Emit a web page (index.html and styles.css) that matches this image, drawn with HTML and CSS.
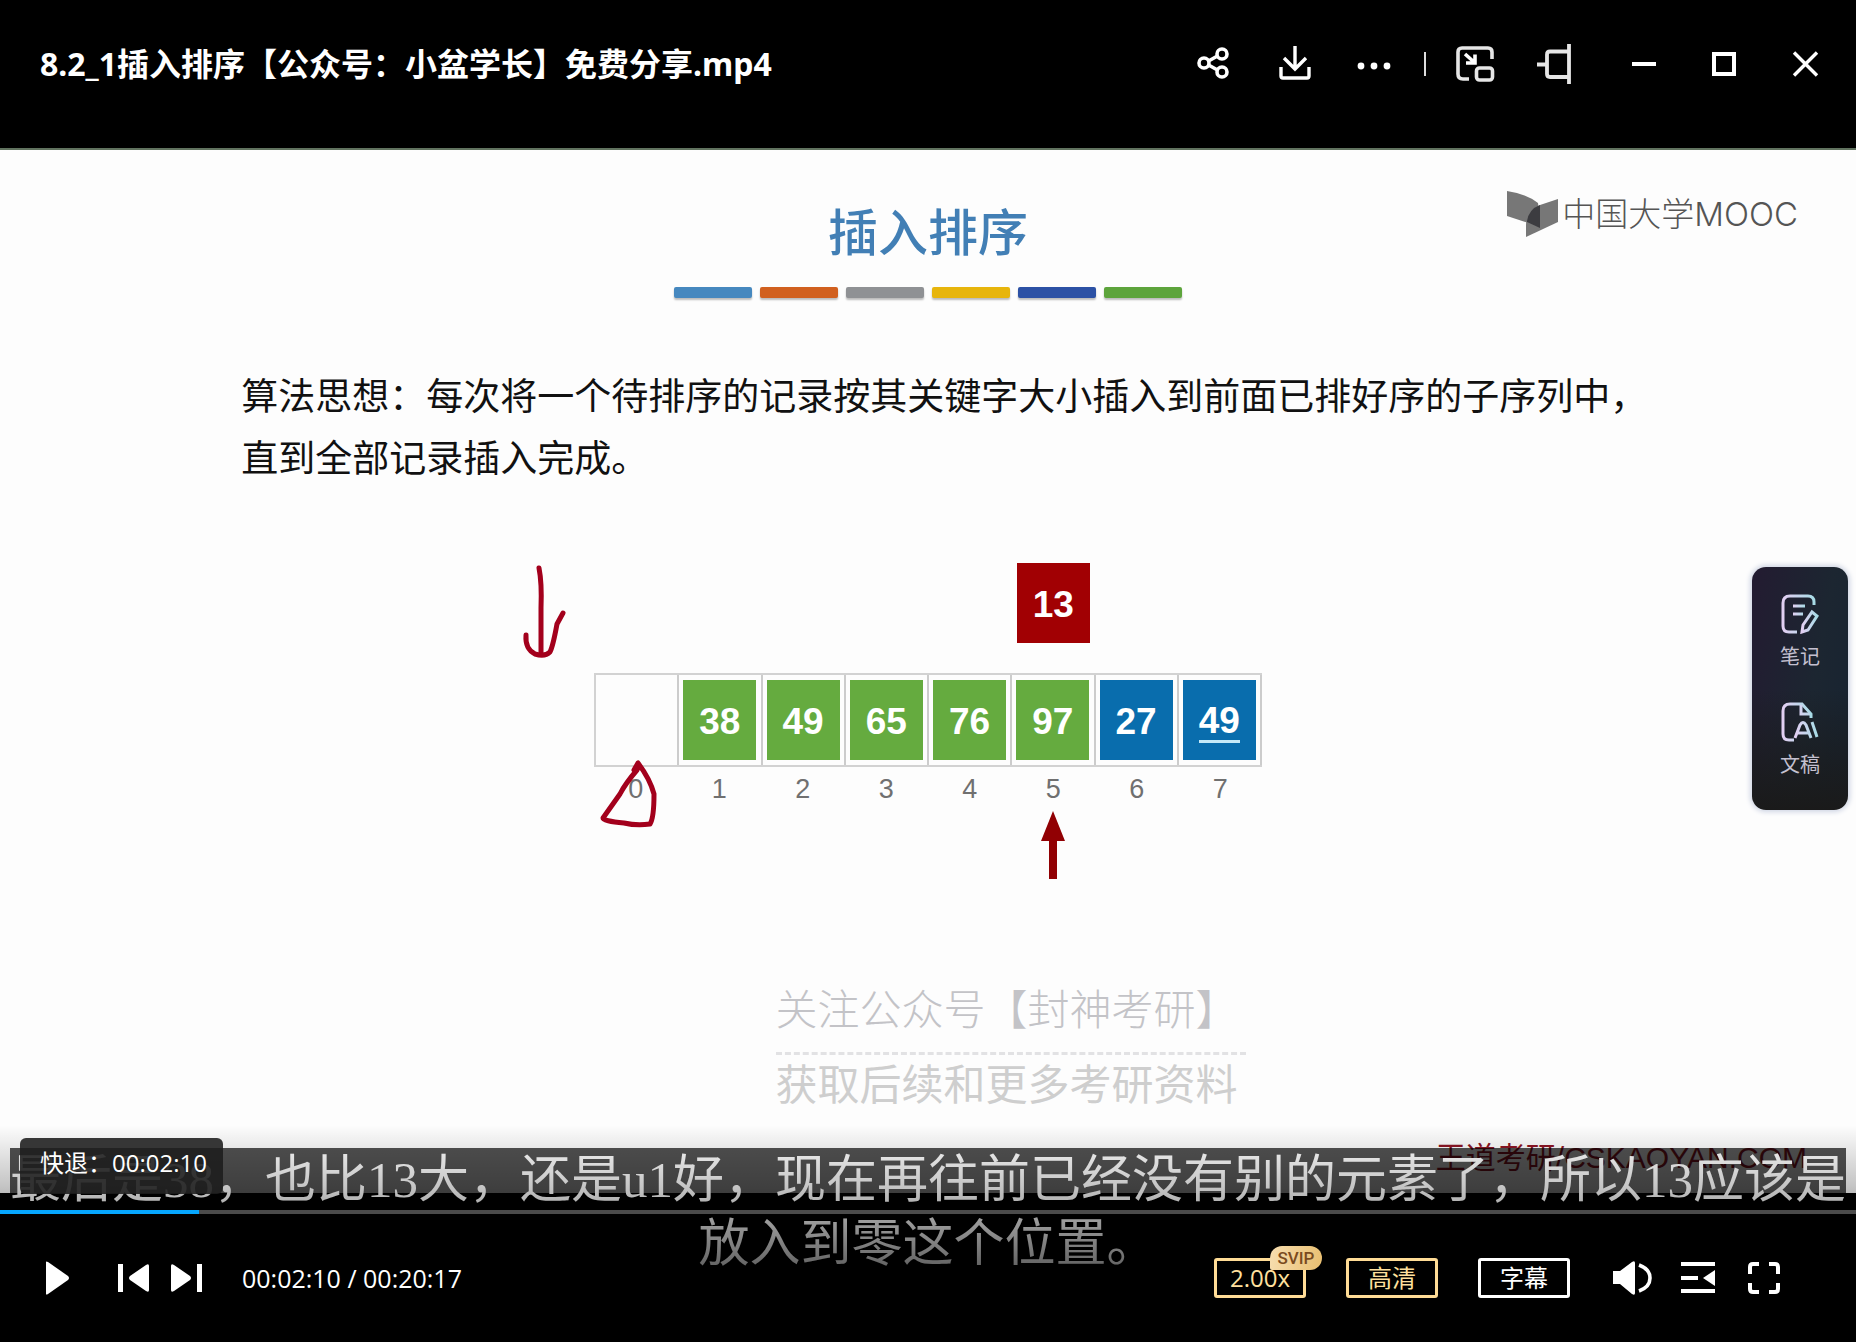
FILE: index.html
```html
<!DOCTYPE html>
<html lang="zh-CN">
<head>
<meta charset="utf-8">
<meta name="viewport" content="width=device-width, initial-scale=1">
<title>8.2_1插入排序【公众号：小盆学长】免费分享.mp4</title>
<link rel="stylesheet" href="styles.css">
</head>
<body>
<div class="player">
  <header class="titlebar">
    <h1 class="file-name">8.2_1插入排序【公众号：小盆学长】免费分享.mp4</h1>
    <div class="actions">
      <button class="icon-btn" aria-label="分享"><svg viewBox="0 0 40 40"><g fill="none" stroke="#fff" stroke-width="3.600"><circle cx="9" cy="19" r="5"/><circle cx="27" cy="10" r="5"/><circle cx="27" cy="28" r="5"/><path d="M13.500 17l9-5M13.500 21l9 5"/></g></svg></button>
      <button class="icon-btn" aria-label="下载"><svg viewBox="0 0 40 40"><path d="M20 2v22M9 14l11 11 11-11M6 23v9q0 2 2 2h24q2 0 2-2v-9" fill="none" stroke="#fff" stroke-width="3.400"/></svg></button>
      <button class="icon-btn" aria-label="更多"><svg viewBox="0 0 40 40"><g fill="#fff"><circle cx="6" cy="22" r="3.400"/><circle cx="19" cy="22" r="3.400"/><circle cx="32" cy="22" r="3.400"/></g></svg></button>
    </div>
    <span class="separator"></span>
    <div class="actions">
      <button class="icon-btn" aria-label="画中画"><svg viewBox="0 0 40 40"><g fill="none" stroke="#e6e6e6" stroke-width="3.600"><path d="M37 15V8q0-4-4-4H7Q3 4 3 8v22q0 5 5 5h6"/><rect x="21.500" y="24" width="16" height="12" rx="3"/></g><path d="M10 10l9 8M20 10.500V19h-9" fill="none" stroke="#fff" stroke-width="3.600"/></svg></button>
      <button class="icon-btn" aria-label="置顶"><svg viewBox="0 0 40 40"><path d="M34 0v40M34 7.500H15q-3 0-3 3V30q0 3 3 3h19M2 20.500h10" fill="none" stroke="#e6e6e6" stroke-width="3.800"/></svg></button>
    </div>
    <div class="actions window-actions">
      <button class="icon-btn" aria-label="最小化"><svg viewBox="0 0 40 40"><path d="M7 20h24" stroke="#fff" stroke-width="4"/></svg></button>
      <button class="icon-btn" aria-label="最大化"><svg viewBox="0 0 40 40"><path d="M9 10h20v20H9z" fill="none" stroke="#fff" stroke-width="4"/></svg></button>
      <button class="icon-btn" aria-label="关闭"><svg viewBox="0 0 40 40"><path d="M9 8.500l23 23M32 8.500l-23 23" stroke="#fff" stroke-width="3.400"/></svg></button>
    </div>
  </header>

  <main class="stage">
    <section class="slide">
      <h2 class="slide-title">插入排序</h2>
      <div class="color-bars"><i class="c1"></i><i class="c2"></i><i class="c3"></i><i class="c4"></i><i class="c5"></i><i class="c6"></i></div>
      <p class="idea">算法思想：每次将一个待排序的记录按其关键字大小插入到前面已排好序的子序列中，<br>直到全部记录插入完成。</p>

      <div class="figure">
        <div class="columns"><span class="tile current">13</span></div>
        <ol class="columns cells">
          <li></li>
          <li><span class="tile sorted">38</span></li>
          <li><span class="tile sorted">49</span></li>
          <li><span class="tile sorted">65</span></li>
          <li><span class="tile sorted">76</span></li>
          <li><span class="tile sorted">97</span></li>
          <li><span class="tile pending">27</span></li>
          <li><span class="tile pending"><u>49</u></span></li>
        </ol>
        <div class="columns indexes"><span>0</span><span>1</span><span>2</span><span>3</span><span>4</span><span>5</span><span>6</span><span>7</span></div>
        <div class="columns"><svg class="pointer" viewBox="0 0 24 68"><path d="M12 0l12 30h-8v38H8V30H0z" fill="#910003"/></svg></div>
        <svg class="ink" viewBox="0 0 150 270"><g fill="none" stroke="#a3001c" stroke-width="5" stroke-linecap="round" stroke-linejoin="round"><path d="M20 5q3 15 2 40v44"/><path d="M7 72q-1 14 9 19 10 3 15-2 3-6 7-28l6-11"/><path d="M118 207q-12 14-17 24l-17 24q0 3 21 5 13 3 26 1 4-6 4-30-4-15-16-31l-4 7"/></g></svg>
      </div>

      <div class="promo">
        <p>关注公众号【封神考研】</p>
        <hr>
        <p class="promo-more">获取后续和更多考研资料</p>
      </div>
    </section>

    <div class="mooc">
      <svg viewBox="0 0 52 46"><path d="M0 0q20 3 31 12l3 24L0 25z" fill="#777"/><path d="M33 14l18-6v23L19 46V34q0-13 14-20z" fill="#777"/><path d="M20 30q2-12 13-16v23L20 31z" fill="#3c3c40"/></svg>
      <span>中国大学<b>MOOC</b></span>
    </div>
    <span class="source">王道考研/CSKAOYAN.COM</span>

    <aside class="side-panel">
      <button class="side-btn"><svg viewBox="0 0 38 40"><defs><linearGradient id="glow" x1="0" y1="0" x2="1" y2="0"><stop offset="0" stop-color="#e2cff2"/><stop offset="1" stop-color="#a8dbe6"/></linearGradient></defs><g fill="none" stroke="url(#glow)" stroke-width="3"><path d="M33 11V8q0-6-6-6H9Q2 2 2 9v23q0 6 6 6h8"/><path d="M12 12h12M12 20h10"/><path d="M31 18l5 4-9 14-6 2 1-7z"/></g></svg><span>笔记</span></button>
      <button class="side-btn"><svg viewBox="0 0 38 40"><g fill="none" stroke="url(#glow)" stroke-width="3"><path d="M13 38H8q-6 0-6-6V9q0-7 7-7h12l9 10v4"/><path d="M20 3v9h9M14 36l5-13q3-5 6 0l5 13M17 31h11M31 20l5 15"/></g></svg><span>文稿</span></button>
    </aside>
  </main>

  <footer class="controls">
    <p class="subtitle"><span class="subtitle-line boxed">最后是38，也比13大，还是u1好，现在再往前已经没有别的元素了，所以13应该是</span><span class="subtitle-line">放入到零这个位置。</span></p>
    <div class="shade"></div>
    <div class="toast" role="status">快退：00:02:10</div>
    <div class="progress"><div class="progress-done" style="width:10.7%"></div></div>
    <div class="control-row">
      <button class="icon-btn play" aria-label="播放"><svg viewBox="0 0 40 40"><path d="M8 4q0-1 2 0l20 14q2 2 0 4L10 36q-2 1-2 0z" fill="#fff"/></svg></button>
      <button class="icon-btn" aria-label="上一个"><svg viewBox="0 0 40 40"><path d="M5 6h5v28H5zM36 8v24q0 3-3 1L17 22q-2-2 0-4L33 7q3-2 3 1z" fill="#fff"/></svg></button>
      <button class="icon-btn" aria-label="下一个"><svg viewBox="0 0 40 40"><path d="M35 6h-5v28h5zM4 8v24q0 3 3 1l16-11q2-2 0-4L7 7Q4 5 4 8z" fill="#fff"/></svg></button>
      <span class="time">00:02:10 / 00:20:17</span>
      <div class="options">
        <button class="option gold">2.00x<span class="badge">SVIP</span></button>
        <button class="option gold">高清</button>
        <button class="option">字幕</button>
      </div>
      <div class="tools">
        <button class="icon-btn" aria-label="音量"><svg viewBox="0 0 40 40"><path d="M1 13h7L20 4q3-2 3 1v30q0 3-3 1L8 26H1z" fill="#fff"/><path d="M28 7q11 4 11 13T28 33" transform="translate(-1)" fill="none" stroke="#fff" stroke-width="3.600"/></svg></button>
        <button class="icon-btn" aria-label="播放列表"><svg viewBox="0 0 40 40"><path d="M3 4h34v4H3zM3 18h17v4H3zM3 31h34v4H3zM37 12v16L25 20z" fill="#fff"/></svg></button>
        <button class="icon-btn" aria-label="全屏"><svg viewBox="0 0 40 40"><path d="M6 16V9q0-3 3-3h6M25 6h6q3 0 3 3v7M34 25v6q0 3-3 3h-6M15 34H9q-3 0-3-3v-6" fill="none" stroke="#fff" stroke-width="4"/></svg></button>
      </div>
    </div>
  </footer>
</div>
</body>
</html>
```
FILE: styles.css
```css
* { box-sizing: border-box; }

body {
  margin: 0;
  background: #000;
  color: #fff;
  font-family: "Open Sans", "Noto Sans CJK SC", sans-serif;
}

button {
  padding: 0;
  border: 0;
  background: none;
  color: inherit;
  font: inherit;
}

h1, h2, p, ol { margin: 0; padding: 0; }

.player {
  display: flex;
  flex-direction: column;
  min-height: 100vh;
}

/* Title bar */
.titlebar {
  display: flex;
  align-items: center;
  height: 148px;
  padding: 0 31px 20px 40px;
}

.file-name {
  flex: 1;
  font-family: "Noto Sans", "Noto Sans CJK SC", sans-serif;
  font-size: 32px;
  font-weight: 700;
  line-height: 40px;
  white-space: nowrap;
}

.actions { display: flex; gap: 40px; }
.window-actions { margin-left: 50px; }

.icon-btn { width: 40px; height: 40px; }
.icon-btn svg { display: block; width: 40px; height: 40px; }

.separator {
  width: 2px;
  height: 24px;
  margin: 0 29px;
  background: #ddd;
}

/* Video */
.stage {
  position: relative;
  flex: 1;
  border-top: 2px solid #61735f;
  background: #fdfdfd;
  color: #111;
}

.slide { padding: 52px 0 80px; }

.slide-title {
  color: #427fb5;
  font-size: 50px;
  font-weight: 500;
  line-height: 60px;
  text-align: center;
}

.color-bars {
  display: grid;
  grid-template-columns: repeat(6, 1fr);
  gap: 8px;
  width: 508px;
  margin: 25px auto 0;
}

.color-bars i {
  height: 11px;
  border-radius: 2px;
  box-shadow: 0 2px 2px #bbb;
}

.c1 { background: #4688bf; }
.c2 { background: #d1601f; }
.c3 { background: #8f9194; }
.c4 { background: #e7b50c; }
.c5 { background: #2c51a5; }
.c6 { background: #5da43c; }

.idea {
  margin-top: 67px;
  padding-left: 13%;
  font-size: 37px;
  line-height: 62px;
  white-space: nowrap;
}

.figure {
  position: relative;
  width: 668px;
  margin: 74px auto 0;
  font-family: "Liberation Sans", sans-serif;
}

.columns {
  display: grid;
  grid-template-columns: repeat(8, 1fr);
  justify-items: center;
}

.tile {
  display: grid;
  place-items: center;
  width: 73px;
  height: 80px;
  padding-top: 4px;
  color: #fff;
  font-size: 37px;
  font-weight: 700;
}

.tile u {
  border-bottom: 3px solid #c5e9f8;
  line-height: 38px;
  text-decoration: none;
}

.current { grid-column: 6; background: #a10003; }
.sorted { background: #65ab3f; }
.pending { background: #096dad; }

.cells {
  margin-top: 30px;
  border: 2px solid #d2d2d2;
  border-right: 0;
  list-style: none;
}

.cells li {
  display: grid;
  place-items: center;
  width: 100%;
  height: 90px;
  border-right: 2px solid #ccc;
}

.indexes {
  margin-top: 7px;
  color: #707070;
  font-size: 27px;
  line-height: 30px;
}

.pointer {
  grid-column: 6;
  width: 24px;
  height: 68px;
  margin-top: 7px;
}

.ink {
  position: absolute;
  top: 0;
  left: -75px;
  width: 150px;
  height: 270px;
}

.promo {
  width: 470px;
  margin: 105px 0 0 776px;
  margin-left: calc(42% - 4px);
  color: #c3c3c7;
  font-size: 42px;
  font-weight: 300;
  line-height: 50px;
  white-space: nowrap;
}

.promo hr {
  margin: 18px 0 4px;
  border: 0;
  border-top: 3px dashed #e2e2e4;
}

.promo-more { font-weight: 400; color: #cecece; }

.mooc {
  position: absolute;
  top: 41px;
  right: 58px;
  display: flex;
  align-items: center;
  gap: 3px;
  color: #555;
  font-size: 33px;
  font-weight: 300;
  line-height: 46px;
}

.mooc svg { width: 52px; height: 46px; }
.mooc b { font-family: Inter, sans-serif; font-weight: 300; }

.source {
  position: absolute;
  right: 49px;
  bottom: 15px;
  color: #8d1524;
  font-family: "Liberation Sans", "Noto Sans CJK SC", sans-serif;
  font-size: 30px;
  line-height: 40px;
}

.side-panel {
  position: absolute;
  top: 40%;
  right: 8px;
  display: flex;
  flex-direction: column;
  gap: 30px;
  width: 96px;
  padding: 27px 0 30px;
  border-radius: 14px;
  background: linear-gradient(transparent 50%, #1a1a1a), linear-gradient(100deg, #231b31, #1c2631 60%, #172331);
  box-shadow: 0 0 5px 2px #cfd5e4;
}

.side-btn {
  display: flex;
  flex-direction: column;
  align-items: center;
  gap: 8px;
  color: #c4c0d0;
  font-size: 20px;
  line-height: 30px;
}

.side-btn svg { width: 38px; height: 40px; }

/* Bottom controls; subtitles run over the edge of the video */
.controls { position: relative; padding-top: 17px; }

.subtitle {
  position: absolute;
  bottom: 66px;
  left: 0;
  right: 0;
  display: flex;
  flex-direction: column;
  align-items: center;
  color: #fff;
  font-family: "Liberation Serif", "Noto Sans CJK SC", serif;
  font-size: 51px;
  font-weight: 400;
  line-height: 64px;
  white-space: nowrap;
}

.boxed { background: rgba(0, 0, 0, 0.68); }

.shade {
  position: absolute;
  inset: -68px 0 0;
  background: linear-gradient(transparent, rgba(0, 0, 0, 0.22) 60px, rgba(0, 0, 0, 0.6) 140px, #000);
}

.toast {
  position: absolute;
  top: -55px;
  left: 20px;
  height: 56px;
  padding: 0 16px 0 20px;
  border-radius: 6px;
  background: rgba(28, 28, 28, 0.88);
  font-size: 24px;
  line-height: 50px;
}

.progress { position: relative; height: 4px; background: #4b4b4b; }
.progress-done { height: 4px; background: #06a7ff; }

.control-row {
  position: relative;
  display: flex;
  align-items: center;
  height: 128px;
  padding: 0 72px 0 38px;
}

.play { margin-right: 35px; }
.play + .icon-btn { margin-right: 14px; }

.time { margin-left: 35px; font-size: 25px; }

.options { display: flex; gap: 40px; margin-left: auto; }

.option {
  position: relative;
  width: 92px;
  height: 40px;
  border: 3px solid #fff;
  border-radius: 3px;
  font-size: 24px;
  line-height: 34px;
}

.gold { border-color: #ffdc96; color: #ffe09e; }

.badge {
  position: absolute;
  top: -15px;
  right: -19px;
  width: 52px;
  height: 24px;
  border-radius: 12px 12px 12px 2px;
  background: linear-gradient(100deg, #f7deb0, #e9bf70);
  color: #7a4b1e;
  font-family: Roboto, sans-serif;
  font-size: 17px;
  font-weight: 500;
  line-height: 25px;
}

.tools { display: flex; gap: 26px; margin-left: 42px; }
```
